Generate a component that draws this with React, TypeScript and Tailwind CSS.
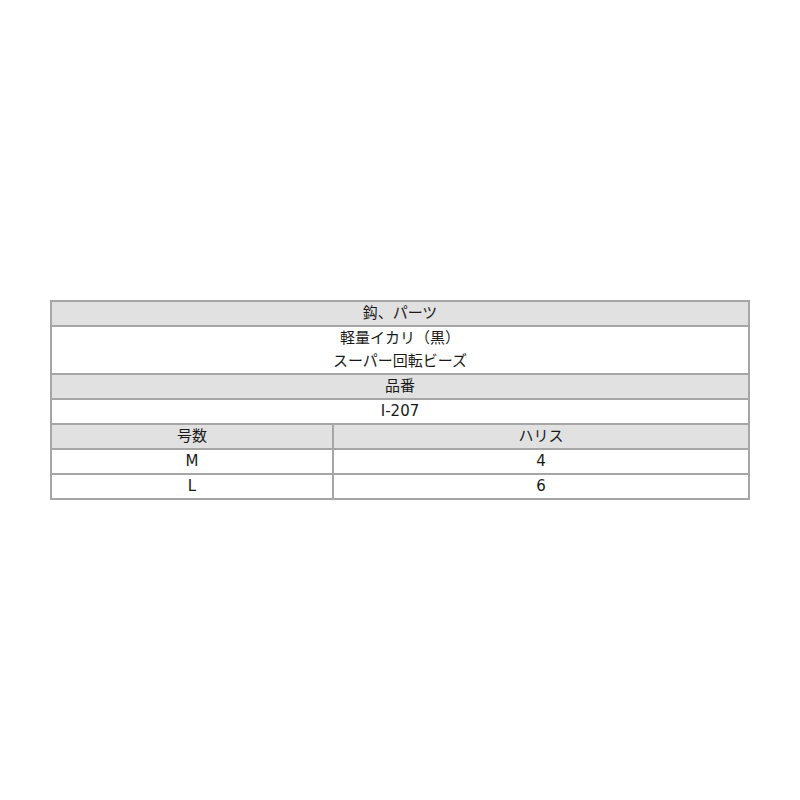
const cell = "border-2 border-[#a6a6a6] p-0 text-center leading-[23px]";
const head = `${cell} bg-[#e1e1e1]`;

export default function App() {
  return (
    <div className="flex h-[800px] w-full items-center justify-center bg-white">
      <table
        className="w-[700px] border-collapse text-[15px] text-[#1a1a1a]"
        style={{ fontFamily: '"DejaVu Sans", "Noto Sans CJK JP", sans-serif' }}
      >
        <tbody>
          <tr>
            <td colSpan={2} className={head}>鈎、パーツ</td>
          </tr>
          <tr>
            <td colSpan={2} className={cell}>
              軽量イカリ（黒）
              <br />
              スーパー回転ビーズ
            </td>
          </tr>
          <tr>
            <td colSpan={2} className={head}>品番</td>
          </tr>
          <tr>
            <td colSpan={2} className={cell}>I-207</td>
          </tr>
          <tr>
            <td className={`${head} w-[282px]`}>号数</td>
            <td className={head}>ハリス</td>
          </tr>
          <tr>
            <td className={cell}>M</td>
            <td className={cell}>4</td>
          </tr>
          <tr>
            <td className={cell}>L</td>
            <td className={cell}>6</td>
          </tr>
        </tbody>
      </table>
    </div>
  );
}
